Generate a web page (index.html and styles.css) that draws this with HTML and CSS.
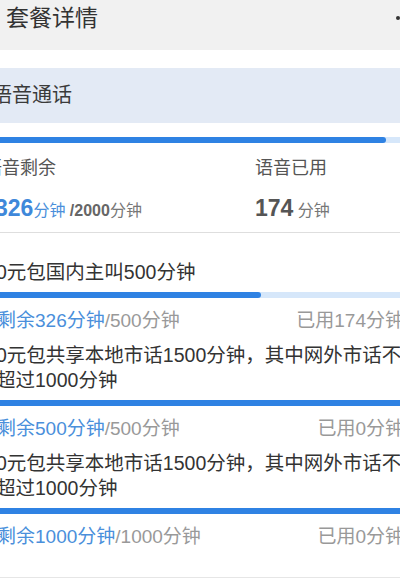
FILE: index.html
```html
<!DOCTYPE html>
<html lang="zh-CN">
<head>
    <meta charset="UTF-8">
    <meta name="viewport" content="width=device-width, initial-scale=1.0">
    <title>套餐详情</title>
    <link rel="stylesheet" href="styles.css">
</head>
<body>
    <div class="page">
        <div class="header">
            <h1>套餐详情</h1>
            <div class="menu"><i></i><i></i><i></i></div>
        </div>

        <div class="section-head">语音通话</div>

        <div class="bar bar-top"><div class="fill" style="width: 94.1%"></div></div>

        <div class="stats">
            <div class="stat">
                <div class="stat-label">语音剩余</div>
                <div class="stat-value first"><span class="num blue">326</span><span class="blue">分钟</span> <b>/2000</b>分钟</div>
            </div>
            <div class="stat">
                <div class="stat-label">语音已用</div>
                <div class="stat-value"><span class="num">174</span> 分钟</div>
            </div>
        </div>

        <div class="items">
            <div class="item">
                <div class="desc">0元包国内主叫500分钟</div>
                <div class="bar"><div class="fill" style="width: 65.8%"></div></div>
                <div class="meta">
                    <span><span class="blue">剩余326分钟</span>/500分钟</span>
                    <span>已用174分钟</span>
                </div>
            </div>
            <div class="item">
                <div class="desc">0元包共享本地市话1500分钟，其中网外市话不超过1000分钟</div>
                <div class="bar"><div class="fill" style="width: 100%"></div></div>
                <div class="meta">
                    <span><span class="blue">剩余500分钟</span>/500分钟</span>
                    <span>已用0分钟</span>
                </div>
            </div>
            <div class="item">
                <div class="desc">0元包共享本地市话1500分钟，其中网外市话不超过1000分钟</div>
                <div class="bar"><div class="fill" style="width: 100%"></div></div>
                <div class="meta">
                    <span><span class="blue">剩余1000分钟</span>/1000分钟</span>
                    <span>已用0分钟</span>
                </div>
            </div>
        </div>
    </div>
</body>
</html>
```

FILE: styles.css
```css
body {
    margin: 0;
    overflow: hidden;
    background-color: #fff;
    font-family: "Liberation Sans", "Noto Sans CJK SC", sans-serif;
    color: #333;
}
.page {
    width: 442px;
    margin-left: -30px;
}
.header {
    height: 50px;
    box-sizing: border-box;
    padding: 4px 0 0 36px;
    background-color: #f1f1f1;
    display: flex;
    justify-content: space-between;
    align-items: flex-start;
}
.header h1 {
    margin: 0;
    font-size: 23px;
    font-weight: normal;
    line-height: 28px;
    color: #333;
}
.menu {
    width: 16px;
    display: flex;
    gap: 4px;
    padding-top: 12px;
}
.menu i {
    flex: none;
    width: 4px;
    height: 4px;
    border-radius: 50%;
    background-color: #333;
}
.section-head {
    margin-top: 18px;
    height: 55px;
    line-height: 55px;
    padding-left: 22px;
    background-color: #e3eaf5;
    font-size: 20px;
    color: #3a3a3a;
}
.bar {
    height: 6px;
    background-color: #d6e7fa;
}
.bar .fill {
    height: 100%;
    background-color: #2f82e3;
    border-radius: 0 3px 3px 0;
}
.bar-top {
    margin-top: 14px;
}
.stats {
    display: grid;
    grid-template-columns: 271px 1fr;
    padding: 12px 0 8px 14px;
    border-bottom: 1px solid #dedede;
}
.stat-label {
    font-size: 18px;
    line-height: 26px;
    color: #555;
}
.stat-value {
    margin-top: 14px;
    font-size: 16px;
    line-height: 26px;
    color: #777;
}
.stat-value.first {
    padding-left: 11px;
}
.stat-value b {
    color: #666;
}
.num {
    font-size: 23px;
    font-weight: bold;
    color: #555;
}
.blue {
    color: #4a8fdb;
}
.num.blue {
    color: #3f88da;
}
.items {
    padding-top: 27px;
    padding-bottom: 27px;
    border-bottom: 1px solid #e6e6e6;
}
.item + .item {
    margin-top: 9px;
}
.desc {
    padding: 0 6px 0 26px;
    font-size: 19.5px;
    line-height: 25px;
    color: #333;
}
.item .bar {
    margin-top: 7px;
}
.meta {
    display: flex;
    justify-content: space-between;
    margin-top: 10px;
    padding: 0 8px 0 27px;
    font-size: 19px;
    line-height: 26px;
    color: #999;
}
```
